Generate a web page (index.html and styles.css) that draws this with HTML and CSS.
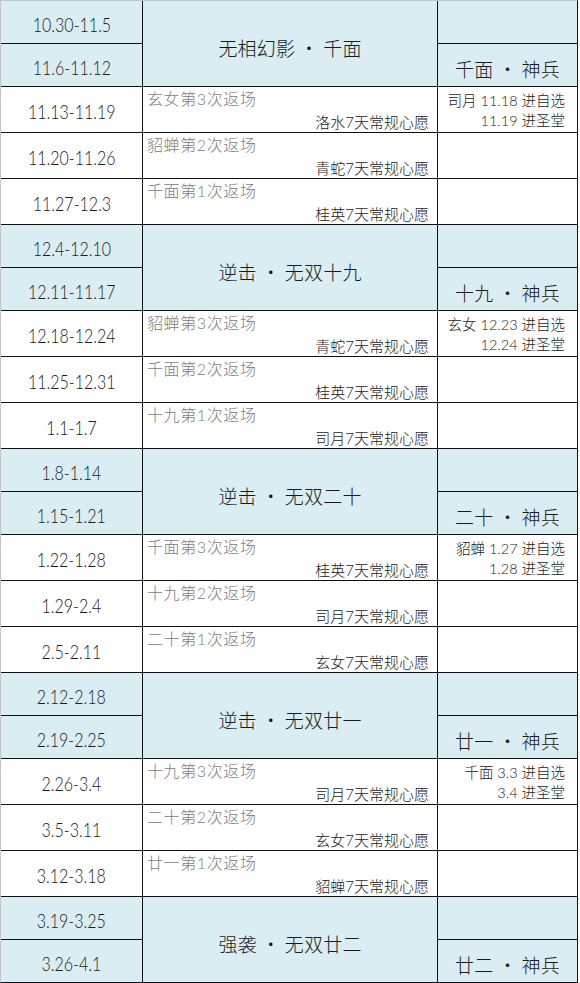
FILE: index.html
```html
<!DOCTYPE html>
<html lang="zh-CN">
<head>
<meta charset="utf-8">
<title>排期表</title>
<link rel="stylesheet" href="styles.css">
</head>
<body>
<div class="table">
  <div class="date blue"><span class="num">10.30-11.5</span></div>
  <div class="head blue">无相幻影 · 千面</div>
  <div class="side blue"></div>
  <div class="date blue"><span class="num">11.6-11.12</span></div>
  <div class="side blue head2">千面 · 神兵</div>

  <div class="date"><span class="num">11.13-11.19</span></div>
  <div class="event"><div class="rerun">玄女第3次返场</div><div class="wish">洛水7天常规心愿</div></div>
  <div class="note"><div>司月 11.18 进自选</div><div>11.19 进圣堂</div></div>
  <div class="date"><span class="num">11.20-11.26</span></div>
  <div class="event"><div class="rerun">貂蝉第2次返场</div><div class="wish">青蛇7天常规心愿</div></div>
  <div class="note"></div>
  <div class="date"><span class="num">11.27-12.3</span></div>
  <div class="event"><div class="rerun">千面第1次返场</div><div class="wish">桂英7天常规心愿</div></div>
  <div class="note"></div>

  <div class="date blue"><span class="num">12.4-12.10</span></div>
  <div class="head blue">逆击 · 无双十九</div>
  <div class="side blue"></div>
  <div class="date blue"><span class="num">12.11-11.17</span></div>
  <div class="side blue head2">十九 · 神兵</div>

  <div class="date"><span class="num">12.18-12.24</span></div>
  <div class="event"><div class="rerun">貂蝉第3次返场</div><div class="wish">青蛇7天常规心愿</div></div>
  <div class="note"><div>玄女 12.23 进自选</div><div>12.24 进圣堂</div></div>
  <div class="date"><span class="num">11.25-12.31</span></div>
  <div class="event"><div class="rerun">千面第2次返场</div><div class="wish">桂英7天常规心愿</div></div>
  <div class="note"></div>
  <div class="date"><span class="num">1.1-1.7</span></div>
  <div class="event"><div class="rerun">十九第1次返场</div><div class="wish">司月7天常规心愿</div></div>
  <div class="note"></div>

  <div class="date blue"><span class="num">1.8-1.14</span></div>
  <div class="head blue">逆击 · 无双二十</div>
  <div class="side blue"></div>
  <div class="date blue"><span class="num">1.15-1.21</span></div>
  <div class="side blue head2">二十 · 神兵</div>

  <div class="date"><span class="num">1.22-1.28</span></div>
  <div class="event"><div class="rerun">千面第3次返场</div><div class="wish">桂英7天常规心愿</div></div>
  <div class="note"><div>貂蝉 1.27 进自选</div><div>1.28 进圣堂</div></div>
  <div class="date"><span class="num">1.29-2.4</span></div>
  <div class="event"><div class="rerun">十九第2次返场</div><div class="wish">司月7天常规心愿</div></div>
  <div class="note"></div>
  <div class="date"><span class="num">2.5-2.11</span></div>
  <div class="event"><div class="rerun">二十第1次返场</div><div class="wish">玄女7天常规心愿</div></div>
  <div class="note"></div>

  <div class="date blue"><span class="num">2.12-2.18</span></div>
  <div class="head blue">逆击 · 无双廿一</div>
  <div class="side blue"></div>
  <div class="date blue"><span class="num">2.19-2.25</span></div>
  <div class="side blue head2">廿一 · 神兵</div>

  <div class="date"><span class="num">2.26-3.4</span></div>
  <div class="event"><div class="rerun">十九第3次返场</div><div class="wish">司月7天常规心愿</div></div>
  <div class="note"><div>千面 3.3 进自选</div><div>3.4 进圣堂</div></div>
  <div class="date"><span class="num">3.5-3.11</span></div>
  <div class="event"><div class="rerun">二十第2次返场</div><div class="wish">玄女7天常规心愿</div></div>
  <div class="note"></div>
  <div class="date"><span class="num">3.12-3.18</span></div>
  <div class="event"><div class="rerun">廿一第1次返场</div><div class="wish">貂蝉7天常规心愿</div></div>
  <div class="note"></div>

  <div class="date blue"><span class="num">3.19-3.25</span></div>
  <div class="head blue">强袭 · 无双廿二</div>
  <div class="side blue"></div>
  <div class="date blue"><span class="num">3.26-4.1</span></div>
  <div class="side blue head2">廿二 · 神兵</div>
</div>
</body>
</html>
```
FILE: styles.css
```css
html, body {
  margin: 0;
  padding: 0;
  background: #ffffff;
}

.table {
  width: 578px;
  box-sizing: border-box;
  border-top: 1px solid #b8c8cc;
  border-left: 1px solid #c4c4c4;
  border-right: 1px solid #111;
  border-bottom: 1px solid #111;
  background: #111;
  display: grid;
  grid-template-columns: 141px 294px 139px;
  grid-template-rows:
    42px 42px 45px 45px 45px
    42px 42px 45px 45px 45px
    42px 42px 45px 45px 45px
    42px 42px 45px 45px 45px
    42px 42px;
  gap: 1px;
  font-family: "Lato", "Noto Sans CJK SC", sans-serif;
  font-weight: 300;
  color: #222;
}

.table > div {
  background: #ffffff;
}

.table > .blue {
  background: #daedf3;
}

.date {
  display: flex;
  align-items: center;
  justify-content: center;
  padding-top: 3px;
  box-sizing: border-box;
}

.num {
  display: inline-block;
  font-family: "Lato", sans-serif;
  font-weight: 300;
  font-size: 20px;
  color: #1a1a1a;
  transform: scaleX(0.8);
}

.head,
.head2 {
  display: flex;
  align-items: center;
  justify-content: center;
  box-sizing: border-box;
  font-family: "Noto Sans CJK SC", sans-serif;
  font-weight: 300;
  font-size: 19px;
  letter-spacing: 0.2px;
  color: #1a1a1a;
}

.head {
  grid-row: span 2;
  padding-top: 8px;
}

.head2 {
  padding-top: 7px;
}

.event {
  display: flex;
  flex-direction: column;
  justify-content: space-between;
  padding: 2px 8px 0 4px;
  box-sizing: border-box;
}

.rerun {
  font-size: 16px;
  line-height: 20px;
  color: #808080;
  letter-spacing: 0.6px;
}

.wish {
  align-self: flex-end;
  font-size: 15px;
  line-height: 19px;
  color: #222;
}

.note {
  display: flex;
  flex-direction: column;
  align-items: flex-end;
  padding: 4px 12px 0 0;
  box-sizing: border-box;
  font-size: 14.5px;
  line-height: 20px;
  color: #222;
}
```
